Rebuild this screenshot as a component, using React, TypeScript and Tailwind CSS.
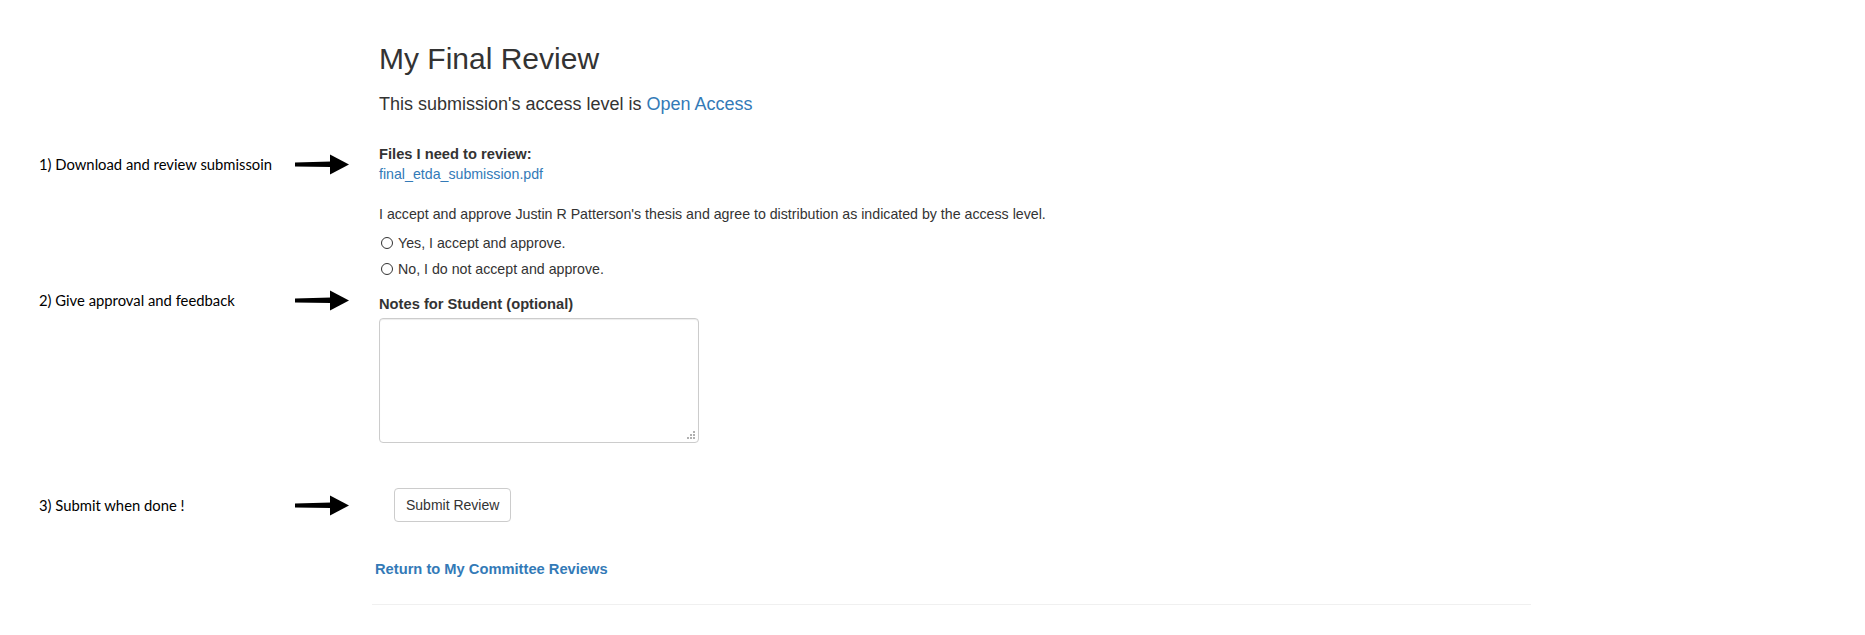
import React from 'react';

const Arrow: React.FC = () => (
    <svg width="54" height="21" viewBox="0 0 54 21" className="shrink-0">
        <polygon points="0,8.5 36,7.5 36,13 0,12.5" fill="#000" />
        <polygon points="35,0.5 54,10.5 35,20.5" fill="#000" />
    </svg>
);

// left column: the hand-written steps with their arrows
const Note: React.FC<{ text: string; className?: string }> = ({ text, className = '' }) => (
    <div className={`w-[379px] shrink-0 flex items-center pl-[39px] ${className}`}>
        <div className="w-[256px] font-['Lato',sans-serif] text-[14.8px] text-black">{text}</div>
        <Arrow />
    </div>
);

const Spacer: React.FC = () => <div className="w-[379px] shrink-0" />;

const App: React.FC = () => {
    return (
        <div className="min-h-screen bg-white font-['Liberation_Sans',Arial,sans-serif] text-[#333] pt-[43px]">
            {/* Heading */}
            <div className="flex">
                <Spacer />
                <div className="flex flex-col">
                    <h2 className="text-[30px] leading-[32px]">My Final Review</h2>
                    <p className="mt-[17px] text-[18px] leading-[25px]">
                        This submission's access level is <a className="text-[#337ab7]">Open Access</a>
                    </p>
                </div>
            </div>

            {/* Files */}
            <div className="flex mt-[28px]">
                <Note text="1) Download and review submissoin" />
                <div className="flex flex-col">
                    <div className="text-[14.7px] font-bold leading-[19px]">Files I need to review:</div>
                    <a className="text-[14.2px] leading-[20px] text-[#337ab7]">final_etda_submission.pdf</a>
                </div>
            </div>

            {/* Approval */}
            <div className="flex mt-[20px]">
                <Spacer />
                <div className="flex flex-col text-[14.2px] leading-[20px]">
                    <p>I accept and approve Justin R Patterson's thesis and agree to distribution as indicated by the access level.</p>
                    <label className="flex items-center mt-[9px]">
                        <input type="radio" name="approve" className="appearance-none w-[12px] h-[12px] rounded-full border border-[#333] ml-[2px] mr-[5px]" />
                        Yes, I accept and approve.
                    </label>
                    <label className="flex items-center mt-[6px]">
                        <input type="radio" name="approve" className="appearance-none w-[12px] h-[12px] rounded-full border border-[#333] ml-[2px] mr-[5px]" />
                        No, I do not accept and approve.
                    </label>
                </div>
            </div>

            {/* Notes */}
            <div className="flex items-center h-[20px] mt-[15px]">
                <Note text="2) Give approval and feedback" className="mb-[8px]" />
                <div className="text-[14.7px] font-bold leading-[20px]">Notes for Student (optional)</div>
            </div>
            <div className="flex mt-[4px]">
                <Spacer />
                <div className="relative">
                    <textarea className="block w-[320px] h-[125px] resize-none border border-[#ccc] rounded-[4px] shadow-[inset_0_1px_1px_rgba(0,0,0,0.075)] outline-none" />
                    {/* resize grip */}
                    <div className="absolute right-[4px] bottom-[4px] grid grid-cols-3 gap-[1px]">
                        <span className="w-[2px] h-[2px]" />
                        <span className="w-[2px] h-[2px]" />
                        <span className="w-[2px] h-[2px] bg-[#b0b0b0]" />
                        <span className="w-[2px] h-[2px]" />
                        <span className="w-[2px] h-[2px] bg-[#b0b0b0]" />
                        <span className="w-[2px] h-[2px] bg-[#b0b0b0]" />
                        <span className="w-[2px] h-[2px] bg-[#b0b0b0]" />
                        <span className="w-[2px] h-[2px] bg-[#b0b0b0]" />
                        <span className="w-[2px] h-[2px] bg-[#b0b0b0]" />
                    </div>
                </div>
            </div>

            {/* Submit */}
            <div className="flex mt-[45px]">
                <Note text="3) Submit when done !" />
                <button className="ml-[15px] h-[34px] px-[11px] bg-white border border-[#ccc] rounded-[4px] text-[14px] text-[#333]">
                    Submit Review
                </button>
            </div>

            <div className="flex mt-[37px]">
                <Spacer />
                <a className="-ml-[4px] text-[14.7px] font-bold leading-[20px] text-[#337ab7]">Return to My Committee Reviews</a>
            </div>

            <div className="flex mt-[25px]">
                <Spacer />
                <div className="-ml-[7px] w-[1159px] border-t border-[#f0f0f0]" />
            </div>
        </div>
    );
};

export default App;
